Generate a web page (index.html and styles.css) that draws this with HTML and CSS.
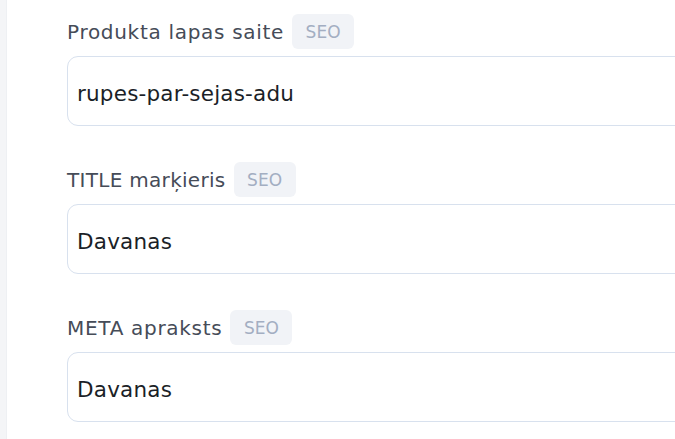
FILE: index.html
```html
<!DOCTYPE html>
<html lang="lv">
<head>
<meta charset="utf-8">
<link rel="stylesheet" href="styles.css">
</head>
<body>
<div class="page">
  <div class="rail"></div>
  <main class="main">
    <div class="field">
      <div class="label-row"><span class="label">Produkta lapas saite</span><span class="badge">SEO</span></div>
      <div class="input">rupes-par-sejas-adu</div>
    </div>
    <div class="field">
      <div class="label-row"><span class="label label-tight">TITLE marķieris</span><span class="badge">SEO</span></div>
      <div class="input">Davanas</div>
    </div>
    <div class="field">
      <div class="label-row"><span class="label">META apraksts</span><span class="badge">SEO</span></div>
      <div class="input">Davanas</div>
    </div>
  </main>
</div>
</body>
</html>
```
FILE: styles.css
```css
html, body {
  margin: 0;
  padding: 0;
  background: #ffffff;
  font-family: "DejaVu Sans", "Noto Sans", sans-serif;
}
.page {
  display: flex;
  width: 675px;
  height: 439px;
  overflow: hidden;
}
.rail {
  width: 7px;
  flex: 0 0 7px;
  background: #f4f5f7;
  border-right: 1px solid #eef0f3;
  box-sizing: border-box;
}
.main {
  flex: 1;
  padding: 14px 0 0 60px;
  overflow: hidden;
}
.field {
  margin-bottom: 36px;
}
.label-row {
  display: flex;
  align-items: center;
  gap: 8px;
  height: 35px;
}
.label {
  font-size: 20px;
  letter-spacing: 0.7px;
  color: #464c58;
  white-space: nowrap;
}
.label-tight {
  letter-spacing: 0.3px;
}
.badge {
  display: inline-flex;
  align-items: center;
  justify-content: center;
  width: 62px;
  height: 35px;
  border-radius: 6px;
  background: #f1f3f7;
  color: #a3aec2;
  font-size: 17px;
  padding-top: 1px;
  box-sizing: border-box;
}
.input {
  margin-top: 7px;
  width: 700px;
  height: 70px;
  box-sizing: border-box;
  border: 1.5px solid #d8e1ee;
  border-radius: 11px;
  padding: 4px 0 0 9px;
  display: flex;
  align-items: center;
  font-size: 21.5px;
  letter-spacing: 0.2px;
  color: #1b1f27;
  white-space: nowrap;
}
```
